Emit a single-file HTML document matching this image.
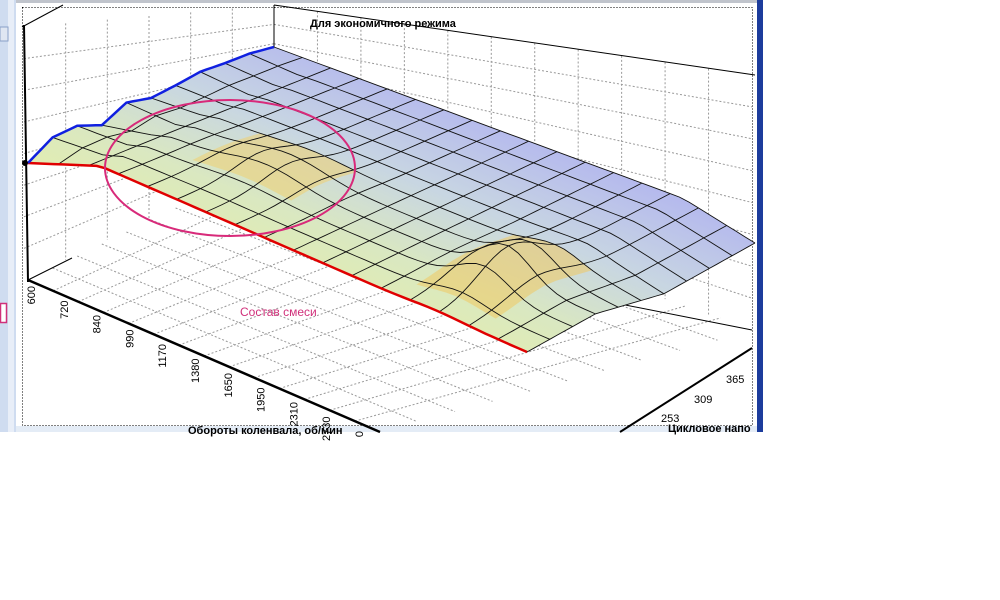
<!DOCTYPE html>
<html><head><meta charset="utf-8"><style>
html,body{margin:0;padding:0;background:#fff;width:1000px;height:600px;overflow:hidden}
svg{position:absolute;left:0;top:0}
text{font-family:"Liberation Sans",sans-serif}
</style></head><body>
<svg id="s" width="1000" height="600" viewBox="0 0 1000 600">
<defs>
<linearGradient id="g" gradientUnits="userSpaceOnUse" x1="330" y1="330" x2="430" y2="90">
<stop offset="0" stop-color="#e6f0a8"/><stop offset="0.35" stop-color="#dae8c0"/><stop offset="0.65" stop-color="#c8d6e2"/><stop offset="1" stop-color="#b4b8ee"/>
</linearGradient>
</defs>
<rect x="0" y="0" width="16" height="432" fill="#cfdcf0"/>
<rect x="8" y="0" width="6" height="432" fill="#e8eef8"/>
<rect x="0" y="27" width="8" height="14" fill="#dfe6f2" stroke="#8aa0c8" stroke-width="1"/>
<rect x="0.5" y="303.5" width="6" height="19" fill="#fff" stroke="#d0307a" stroke-width="1.5"/>
<rect x="16" y="0" width="744" height="432" fill="#fff"/>
<rect x="16" y="0" width="744" height="3" fill="#c0c4cc"/>
<rect x="16" y="426" width="744" height="6" fill="#e4ecf6"/>
<rect x="757" y="0" width="6" height="432" fill="#1c3c9c"/>
<rect x="22.5" y="7.5" width="730" height="418" fill="none" stroke="#000" stroke-dasharray="1,2" stroke-width="1"/>
<g id="floor" stroke="#999" stroke-width="1" stroke-dasharray="2,2" fill="none"></g>
<line x1="22" y1="27" x2="63" y2="5" stroke="#000"/>
<line x1="274" y1="5" x2="274" y2="48" stroke="#000"/>
<line x1="274" y1="5" x2="755" y2="75" stroke="#000"/>
<line x1="24" y1="25" x2="28" y2="282" stroke="#000" stroke-width="2"/>
<line x1="28" y1="280" x2="72" y2="258" stroke="#000"/>
<line x1="28" y1="280" x2="380" y2="432" stroke="#000" stroke-width="2.5"/>
<line x1="620" y1="432" x2="752" y2="348" stroke="#000" stroke-width="2"/>
<line x1="600" y1="300" x2="752" y2="330" stroke="#000"/>
<g id="surf"></g>
<ellipse cx="230" cy="168" rx="125" ry="68" fill="none" stroke="#d82a7a" stroke-width="2"/>
<circle cx="25" cy="163" r="3" fill="#000"/>
<text x="310" y="27" font-size="11" font-weight="bold">Для экономичного режима</text>
<text x="240" y="316" font-size="12" fill="#d0307a">Состав смеси</text>
<g font-size="11" fill="#000" id="lab"></g>
<text x="726" y="383" font-size="11">365</text>
<text x="694" y="403" font-size="11">309</text>
<text x="661" y="422" font-size="11">253</text>
<text x="188" y="434" font-size="11" font-weight="bold">Обороты коленвала, об/мин</text>
<text x="668" y="432" font-size="11" font-weight="bold">Цикловое напо</text>
</svg>
<script>
var NS="http://www.w3.org/2000/svg";
function el(p,t,a){var e=document.createElementNS(NS,t);for(var k in a)e.setAttribute(k,a[k]);p.appendChild(e);return e;}
function L(a,b,t){return [a[0]+(b[0]-a[0])*t,a[1]+(b[1]-a[1])*t];}
function ps(a){return a.map(function(p){return p[0].toFixed(1)+','+p[1].toFixed(1)}).join(' ');}
var f=document.getElementById('floor');
var FL=[28,280],FR=[380,432],BL=[274,160],BR=[755,330];
for(var i=1;i<14;i++){var p=L(FL,FR,i/14),q=L(BL,BR,i/14);el(f,'line',{x1:p[0],y1:p[1],x2:q[0],y2:q[1]});}
for(var i=1;i<10;i++){var p=L(FL,BL,i/10),q=L(FR,BR,i/10);el(f,'line',{x1:p[0],y1:p[1],x2:q[0],y2:q[1]});}
for(var i=1;i<11;i++){var x=274+(752-274)*i/11;el(f,'line',{x1:x,y1:5+70*i/11,x2:x,y2:160+170*i/11});}
for(var i=1;i<8;i++){var t=i/8;el(f,'line',{x1:274,y1:5+155*t,x2:752,y2:75+255*t});}
for(var i=1;i<8;i++){var t=i/8;el(f,'line',{x1:24,y1:27+253*t,x2:274,y2:5+155*t});}
for(var i=1;i<6;i++){var x=24+250*i/6;el(f,'line',{x1:x,y1:27-22*i/6,x2:x,y2:280-120*i/6});}
var s=document.getElementById('surf');
var C=[274,47],D=[755,225];
var wig=[0,-14,-14,-3,-14,-7,-8,-10,-7,-5,0];
function front(u){return u<0.14?L([28,163],[100,166],u/0.14):L([100,166],[527,352],(u-0.14)/0.86);}
function P(u,v){
 var a=front(u),b=L(C,D,u),p=L(a,b,v);
 var vi=v*10,i=Math.min(9,Math.floor(vi)),w=wig[i]+(wig[i+1]-wig[i])*(vi-i);
 p[1]+=w*Math.max(0,1-u/0.1);
 var bump=0;
 var d1=(u-0.33)/0.1,e1=(v-0.35)/0.15;bump+=14*Math.exp(-d1*d1-e1*e1);
 var d2=(u-0.82)/0.07,e2=(v-0.3)/0.18;bump+=32*Math.exp(-d2*d2-e2*e2);
 if(u>0.85&&v>0.3){var t=(u-0.85)/0.15;p[1]+=t*18*Math.min(1,(v-0.3)/0.3);}
 p[1]-=bump;return p;}
var poly=[];
for(var i=0;i<=40;i++)poly.push(P(i/40,0));
for(var j=0;j<=20;j++)poly.push(P(1,j/20));
for(var i=40;i>=0;i--)poly.push(P(i/40,1));
for(var j=20;j>=0;j--)poly.push(P(0,j/20));
el(s,'polygon',{points:ps(poly),fill:'url(#g)'});
function patch(u0,u1,v0,v1,c){var pts=[];for(var i=0;i<=8;i++)pts.push(P(u0+(u1-u0)*i/8,v0));for(var i=0;i<=8;i++)pts.push(P(u1,v0+(v1-v0)*i/8));for(var i=8;i>=0;i--)pts.push(P(u0+(u1-u0)*i/8,v1));for(var i=8;i>=0;i--)pts.push(P(u0,v0+(v1-v0)*i/8));
el(s,'polygon',{points:ps(pts),fill:c,opacity:0.55});}
patch(0.22,0.42,0.22,0.5,'#f0d070');
patch(0.74,0.9,0.08,0.5,'#f0c860');
var nc=17,nr=10;
for(var j=0;j<=nr;j++){var pts=[];for(var i=0;i<=nc*3;i++)pts.push(P(i/(nc*3),j/nr));el(s,'polyline',{points:ps(pts),fill:'none',stroke:'#111','stroke-width':0.9});}
for(var i=0;i<=nc;i++){var pts=[];for(var j=0;j<=nr*3;j++)pts.push(P(i/nc,j/(nr*3)));el(s,'polyline',{points:ps(pts),fill:'none',stroke:'#111','stroke-width':0.9});}
var r=[];for(var i=0;i<=60;i++)r.push(P(i/60,0));
el(s,'polyline',{points:ps(r),fill:'none',stroke:'#e00000','stroke-width':2.5});
var b=[];for(var j=0;j<=40;j++)b.push(P(0,j/40));
el(s,'polyline',{points:ps(b),fill:'none',stroke:'#1020e0','stroke-width':2.5});
var labs=["600","720","840","990","1170","1380","1650","1950","2310","2730","0"];
var lg=document.getElementById('lab');
for(var i=0;i<labs.length;i++){var p=L([30,283],[358,428],i/10);
 var t=el(lg,'text',{transform:'translate('+(p[0]+5)+','+(p[1]+3)+') rotate(-90)','text-anchor':'end'});t.textContent=labs[i];}
</script>
</body></html>
